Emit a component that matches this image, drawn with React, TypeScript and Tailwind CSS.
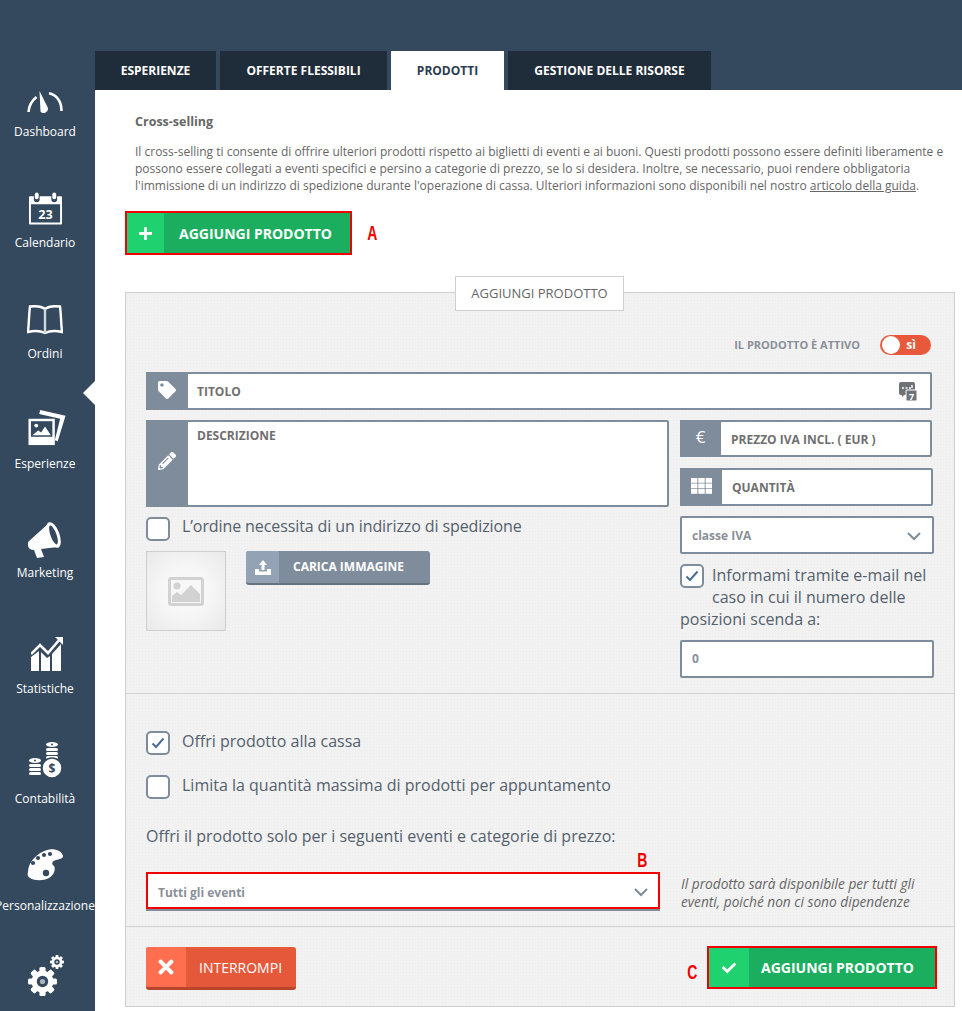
import React from "react";
import { FaTag, FaPencilAlt, FaTimes, FaCheck, FaPlus } from "react-icons/fa";

const font = { fontFamily: '"Open Sans", sans-serif' };
const SIDE = "#34495e";

function Gauge() {
  return (
    <svg width="36" height="22" viewBox="0 0 36 22" fill="none">
      <path d="M1.500 21 C2 14 5 9.500 9.500 6" stroke="white" strokeWidth="2.600" />
      <path d="M22 2.200 C29 3.500 34.500 10 34.500 20" stroke="white" strokeWidth="2.600" />
      <path d="M12.500 0 L20.500 16 A4.200 4.200 0 0 1 13.500 20.500 Z" fill="white" />
    </svg>
  );
}
function Calendar() {
  return (
    <svg width="35" height="34" viewBox="0 0 36 34">
      <path d="M2 4 H6 V7 A3 3 0 0 0 12 7 V4 H24 V7 A3 3 0 0 0 30 7 V4 H34 A1 1 0 0 1 35 5 V32 A1 1 0 0 1 34 33 H2 A1 1 0 0 1 1 32 V5 A1 1 0 0 1 2 4 Z M3 12 V31 H33 V12 Z" fill="white" fillRule="evenodd" />
      <rect x="7" y="0" width="4" height="7" rx="2" fill="white" />
      <rect x="25" y="0" width="4" height="7" rx="2" fill="white" />
      <text x="18" y="27" textAnchor="middle" fontSize="13" fontWeight="700" fill="white" fontFamily="Open Sans, sans-serif">23</text>
    </svg>
  );
}
function Book() {
  return (
    <svg width="36" height="30" viewBox="0 0 36 30" fill="none" stroke="white" strokeWidth="2.400">
      <path d="M18 4 C15 1.500 9 0.800 3 1.500 C2 8 2 18 1 27 C7 25.500 14 26 18 28 C22 26 29 25.500 35 27 C34 18 34 8 33 1.500 C27 0.800 21 1.500 18 4 Z" />
      <path d="M18 4 V28" stroke="#cfd6dc" />
    </svg>
  );
}
function Photos() {
  return (
    <svg width="40" height="37" viewBox="0 0 40 38">
      <path d="M13 0 L39 6 L31 32 L28 31 L33.500 9 L12 4 Z" fill="white" />
      <rect x="1" y="9" width="27" height="27" fill="white" />
      <rect x="3.500" y="11.500" width="22" height="16" fill={SIDE} />
      <circle cx="9" cy="16" r="2" fill="white" />
      <path d="M5 26 L11 21 L14 23 L18 17 L24 26 Z" fill="white" />
    </svg>
  );
}
function Megaphone() {
  return (
    <svg width="36" height="36" viewBox="0 0 36 36">
      <path d="M1 20 L22 1 L31 25 L14 27 L17 35 L10 36 L7 28 Q2 28 1 24 Z" fill="white" />
      <ellipse cx="26.500" cy="13" rx="6" ry="13.500" transform="rotate(-20 26.500 13)" fill="white" />
      <ellipse cx="26.500" cy="13" rx="3" ry="10" transform="rotate(-20 26.500 13)" fill={SIDE} />
    </svg>
  );
}
function Chart() {
  return (
    <svg width="33" height="36" viewBox="0 0 33 36">
      <path d="M0 36 V22 L8 16 V36 Z M10 36 V17 L16 23 L19 21 V36 Z M21 36 V19 L30 9 V36 Z" fill="white" />
      <path d="M0 19 L9 10 L17 18 L29 4" stroke="white" strokeWidth="2.600" fill="none" />
      <path d="M24 2 H32 V10 Z" fill="white" />
    </svg>
  );
}
function Coins() {
  return (
    <svg width="33" height="36" viewBox="0 0 33 36">
      <ellipse cx="23" cy="2.500" rx="6" ry="2.500" fill="white" />
      <circle cx="23" cy="2.500" r="1" fill={SIDE} />
      {[6, 10, 14].map((y) => <rect key={y} x="17" y={y} width="12" height="3" rx="1.500" fill="white" />)}
      <ellipse cx="6" cy="18.500" rx="6" ry="2.500" fill="white" />
      <circle cx="6" cy="18.500" r="1" fill={SIDE} />
      {[22, 26, 30].map((y) => <rect key={y} x="0" y={y} width="12" height="3" rx="1.500" fill="white" />)}
      <circle cx="23" cy="26" r="10" fill="white" stroke={SIDE} strokeWidth="1.500" />
      <text x="23" y="30.500" textAnchor="middle" fontSize="12" fontWeight="700" fill={SIDE} fontFamily="Open Sans, sans-serif">$</text>
    </svg>
  );
}
function Palette() {
  return (
    <svg width="37" height="34" viewBox="0 0 37 34">
      <path d="M1 24 C1 14 10 5 20 2 C27 0 35 3 36 8 C36 11 32 11 29 12 C25 13 24 16 27 18 C29 21 27 27 22 30 C16 33 8 33 3 30 C1 29 0 27 1 24 Z" fill="white" />
      {[[6, 15], [11, 10], [17, 7], [23, 6]].map(([x, y]) => <circle key={x} cx={x} cy={y} r="2.100" fill={SIDE} />)}
      <circle cx="19" cy="25" r="3.200" fill={SIDE} />
    </svg>
  );
}
function Gear({ size }: { size: number }) {
  return (
    <svg width={size} height={size} viewBox="0 0 28 28">
      {[0, 45, 90, 135, 180, 225, 270, 315].map((a) => (
        <rect key={a} x="11" y="0" width="6" height="7" rx="1.500" fill="white" transform={`rotate(${a} 14 14)`} />
      ))}
      <circle cx="14" cy="14" r="10.500" fill="white" />
      <circle cx="14" cy="14" r="5.500" fill={SIDE} />
      <circle cx="14" cy="14" r="2.500" fill="#aab4be" />
    </svg>
  );
}
function Nav({ h, label, icon, iconClass }: { h: string; label: string; icon: React.ReactNode; iconClass: string }) {
  return (
    <div className={`flex flex-col items-center ${h}`}>
      <div className={`flex justify-center items-start ${iconClass}`}>{icon}</div>
      <span className="text-[12px] leading-[17px] text-white whitespace-nowrap">{label}</span>
    </div>
  );
}
function IconBox({ w, children, cls = "" }: { w: string; children: React.ReactNode; cls?: string }) {
  return <div className={`${w} shrink-0 bg-[#7f8c9b] flex justify-center text-white ${cls}`}>{children}</div>;
}
function Check({ checked, cls = "" }: { checked?: boolean; cls?: string }) {
  return (
    <span className={`w-6 h-6 shrink-0 rounded-[5px] border-2 border-[#7f8c9b] bg-white flex items-center justify-center ${cls}`}>
      {checked && (
        <svg width="14" height="12" viewBox="0 0 14 12" fill="none"><path d="M1.500 6.500 L5 10 L12.500 1.500" stroke="#4a6d95" strokeWidth="2" /></svg>
      )}
    </span>
  );
}
function Chevron() {
  return (
    <svg width="14" height="9" viewBox="0 0 14 9" fill="none"><path d="M1 1 L7 7 L13 1" stroke="#7f8c9b" strokeWidth="2" /></svg>
  );
}
function Anno({ children, cls }: { children: React.ReactNode; cls: string }) {
  return <span className={`absolute text-[#f00000] text-[20px] leading-none font-bold scale-x-[0.7] ${cls}`} style={{ fontFamily: '"Liberation Sans", sans-serif' }}>{children}</span>;
}

export default function App() {
  return (
    <div className="w-[962px] h-[1011px] overflow-hidden flex bg-[#34495e]" style={font}>
      <aside className="w-[95px] shrink-0 pt-[90px] pr-[5px] flex flex-col">
        <Nav h="h-[101px] shrink-0" label="Dashboard" iconClass="h-[33px] pt-[1px]" icon={<Gauge />} />
        <Nav h="h-[111px] shrink-0" label="Calendario" iconClass="h-[43px] pt-[1px]" icon={<Calendar />} />
        <Nav h="h-[108px] shrink-0" label="Ordini" iconClass="h-[43px] pt-[3px]" icon={<Book />} />
        <Nav h="h-[112px] shrink-0" label="Esperienze" iconClass="h-[45px] ml-[3px]" icon={<Photos />} />
        <Nav h="h-[113px] shrink-0" label="Marketing" iconClass="h-[42px]" icon={<Megaphone />} />
        <Nav h="h-[107px] shrink-0" label="Statistiche" iconClass="h-[45px] ml-[4px]" icon={<Chart />} />
        <Nav h="h-[106px] shrink-0" label="Contabilità" iconClass="h-[48px]" icon={<Coins />} />
        <Nav h="h-[110px] shrink-0" label="Personalizzazione" iconClass="h-[49px]" icon={<Palette />} />
        <div className="relative flex flex-col items-center shrink-0 h-[70px]">
          <div className="h-[49px] pt-[9px] -ml-[6px]"><Gear size={29} /></div>
          <div className="absolute top-[-3px] left-[50px]"><Gear size={14} /></div>
          <span className="text-[12px] leading-[17px] text-white whitespace-nowrap">Impostazioni</span>
        </div>
      </aside>
      <main className="flex-1 flex flex-col pt-[51px] relative">
        <span className="absolute left-[-12px] top-[381px] w-0 h-0 border-y-[12px] border-y-transparent border-r-[12px] border-r-white" />
        <nav className="flex gap-1 h-[39px] text-[12px] font-bold text-white">
          <div className="w-[121px] bg-[#1f2c3a] flex items-center justify-center">ESPERIENZE</div>
          <div className="w-[167px] bg-[#1f2c3a] flex items-center justify-center">OFFERTE FLESSIBILI</div>
          <div className="w-[113px] bg-white text-[#2c3e50] flex items-center justify-center">PRODOTTI</div>
          <div className="w-[203px] bg-[#1f2c3a] flex items-center justify-center">GESTIONE DELLE RISORSE</div>
        </nav>
        <section className="flex-1 bg-white pl-[30px] pr-[7px] relative">
          <h2 className="text-[12.5px] leading-[17px] font-bold text-[#666] ml-[10px] mt-[23px]">Cross-selling</h2>
          <p className="ml-[10px] mt-[13px] text-[12px] leading-[17px] text-[#666] w-[815px]">
            Il cross-selling ti consente di offrire ulteriori prodotti rispetto ai biglietti di eventi e ai buoni. Questi prodotti possono essere definiti liberamente e possono essere collegati a eventi specifici e persino a categorie di prezzo, se lo si desidera. Inoltre, se necessario, puoi rendere obbligatoria l'immissione di un indirizzo di spedizione durante l'operazione di cassa. Ulteriori informazioni sono disponibili nel nostro <span className="underline">articolo della guida</span>.
          </p>
          <button className="mt-[17px] w-[227px] h-[44px] border-2 border-[#f00000] bg-[#1bae5f] flex items-stretch text-white font-bold text-[14px]">
            <span className="w-[37px] bg-[#1fd16f] flex items-center justify-center"><FaPlus size={15} /></span>
            <span className="flex-1 flex items-center pl-[15px]">AGGIUNGI PRODOTTO</span>
          </button>
          <Anno cls="left-[270px] top-[133px]">A</Anno>

          <div className="relative mt-[37px] h-[715px] border border-[#cfcfcf] bg-[#f2f2f2] bg-[radial-gradient(#ebebeb_0.6px,transparent_0.6px)] bg-[length:3px_3px] flex flex-col text-[#54606c]">
            <div className="absolute left-[329px] top-[-17px] w-[169px] h-[35px] bg-white border border-[#d0d0d0] flex items-center justify-center text-[13px] text-[#666]">AGGIUNGI PRODOTTO</div>

            <div className="px-[20px] h-[400px] shrink-0 pt-[42px]">
              <div className="flex items-center justify-end h-[20px] pr-[3px] gap-[20px]">
                <span className="text-[11px] font-bold text-[#8a8f98]">IL PRODOTTO È ATTIVO</span>
                <span className="w-[51px] h-[20px] rounded-full bg-[#e8583a] flex items-center pl-[2px] pr-[15px] justify-between">
                  <span className="w-[18px] h-[18px] rounded-full bg-white" />
                  <span className="text-white text-[12px] font-bold">sì</span>
                </span>
              </div>
              <div className="mt-[17px] h-[38px] w-[786px] rounded-[2px] border-2 border-[#7f8c9b] bg-white flex items-stretch">
                <IconBox w="w-[42px]" cls="-ml-[2px] -my-[2px] items-center pb-[2px]"><FaTag size={18} /></IconBox>
                <span className="flex-1 flex items-center pl-[9px] pt-[2px] text-[12px] font-bold text-[#706f6f]">TITOLO</span>
                <svg width="18" height="19" viewBox="0 0 18 19" className="self-center mr-[13px]">
                  <path d="M2 0 H14 A2 2 0 0 1 16 2 V11 A2 2 0 0 1 14 13 H5 L3 15 V13 H2 A2 2 0 0 1 0 11 V2 A2 2 0 0 1 2 0 Z" fill="#6f7378" />
                  <path d="M3 6 H5 M6.500 6 H8.500 M10 6 H12 M13 6 V3" stroke="white" strokeWidth="1.400" fill="none" />
                  <rect x="7" y="8" width="11" height="11" rx="1" fill="#6f7378" stroke="white" />
                  <text x="12.500" y="17.500" textAnchor="middle" fontSize="9" fontWeight="700" fill="white" fontFamily="Open Sans, sans-serif">7</text>
                </svg>
              </div>
              <div className="mt-[10px] flex items-start gap-[11px]">
                <div className="w-[523px] shrink-0">
                  <div className="h-[87px] rounded-[2px] border-2 border-[#7f8c9b] bg-white flex items-stretch">
                    <IconBox w="w-[42px]" cls="-ml-[2px] -my-[2px] items-center pb-[6px]"><FaPencilAlt size={18} /></IconBox>
                    <span className="pl-[9px] pt-[5px] text-[12px] font-bold text-[#706f6f]">DESCRIZIONE</span>
                  </div>
                  <label className="mt-[10px] flex items-center gap-[12px] text-[16px] leading-[24px]"><Check /><span className="-translate-y-[3px] tracking-[-0.1px]">L’ordine necessita di un indirizzo di spedizione</span></label>
                  <div className="mt-[10px] flex items-start gap-[20px]">
                    <div className="w-[80px] h-[80px] border border-[#cfcfcf] bg-[radial-gradient(circle,#f7f7f7_40%,#e9e9e9_100%)] flex items-center justify-center">
                      <svg width="36" height="29" viewBox="0 0 36 29">
                        <rect x="1.500" y="1.500" width="33" height="26" rx="2" fill="none" stroke="#d2d2d2" strokeWidth="3" />
                        <circle cx="9" cy="9" r="3.500" fill="#d2d2d2" />
                        <path d="M4 25 V19 L9 15 L13 18 L23 8 L32 17 V25 Z" fill="#d2d2d2" />
                      </svg>
                    </div>
                    <button className="w-[184px] h-[34px] rounded-[3px] bg-[#7f8c9b] border-b-2 border-b-[#67737f] flex items-stretch text-white font-bold text-[12px]">
                      <span className="w-[33px] bg-[#93a3b5] rounded-l-[3px] flex items-center justify-center">
                        <svg width="16" height="15" viewBox="0 0 16 15"><path d="M8 0 L12 5 H9.500 V10 H6.500 V5 H4 Z M0 9 H4 V11.500 H12 V9 H16 V15 H0 Z" fill="white" /></svg>
                      </span>
                      <span className="flex-1 flex items-center pl-[14px]">CARICA IMMAGINE</span>
                    </button>
                  </div>
                </div>
                <div className="flex-1 min-w-0">
                  <div className="h-[37px] w-[252px] rounded-[2px] border-2 border-[#7f8c9b] bg-white flex items-stretch">
                    <IconBox w="w-[41px]" cls="-ml-[2px] -my-[2px] items-center pb-[3px] text-[17px]">€</IconBox>
                    <span className="flex-1 flex items-center pl-[10px] pt-[2px] text-[12px] font-bold text-[#706f6f]">PREZZO IVA INCL. ( EUR )</span>
                  </div>
                  <div className="mt-[11px] h-[38px] w-[253px] rounded-[2px] border-2 border-[#7f8c9b] bg-white flex items-stretch">
                    <IconBox w="w-[42px]" cls="-ml-[2px] -my-[2px] items-center pb-[3px]">
                      <svg width="21" height="16" viewBox="0 0 21 16" fill="white">
                        {[0, 5.500, 11].map((y) => [0, 7.300, 14.600].map((x) => <rect key={`${x}-${y}`} x={x} y={y} width="6.400" height="4.800" />))}
                      </svg>
                    </IconBox>
                    <span className="flex-1 flex items-center pl-[10px] pt-[2px] text-[12px] font-bold text-[#706f6f]">QUANTITÀ</span>
                  </div>
                  <div className="mt-[10px] h-[38px] w-[254px] border-2 border-[#7f8c9b] rounded-[2px] bg-white flex items-center justify-between pl-[10px] pr-[11px] pt-[2px] text-[12px] font-bold text-[#8a8f98]">
                    <span>classe IVA</span><Chevron />
                  </div>
                  <div className="mt-[10px] text-[16px] leading-[22px] w-[254px]">
                    <Check checked cls="float-left mr-[8px] mb-[2px]" />
                    <span>Informami tramite e-mail nel caso in cui il numero delle posizioni scenda a:</span>
                  </div>
                  <div className="mt-[10px] h-[38px] w-[254px] border-2 border-[#7f8c9b] rounded-[2px] bg-white flex items-center pl-[10px] text-[12px] font-bold text-[#8a8f98]">0</div>
                </div>
              </div>
            </div>

            <div className="border-t border-[#d2d2d2] h-[233px] shrink-0 px-[20px] pt-[37px] flex flex-col">
              <label className="flex items-center gap-[12px] text-[16px] leading-[24px]"><Check checked /><span className="-translate-y-[2px]">Offri prodotto alla cassa</span></label>
              <label className="mt-[20px] flex items-center gap-[12px] text-[16px] leading-[24px]"><Check /><span className="-translate-y-[2px]">Limita la quantità massima di prodotti per appuntamento</span></label>
              <p className="mt-[25px] text-[16px] leading-[24px]">Offri il prodotto solo per i seguenti eventi e categorie di prezzo:</p>
              <div className="mt-[24px] flex items-start">
                <div className="relative w-[514px] h-[37px] border-2 border-[#f00000] bg-white flex items-center justify-between pl-[10px] pr-[10px] pt-[4px] text-[12px] font-bold text-[#8a8f98] shadow-[0_2px_0_#7f8c9b]">
                  <span>Tutti gli eventi</span><Chevron />
                </div>
                <p className="ml-[21px] mt-[3px] text-[13.7px] leading-[18px] italic text-[#666] w-[250px]">Il prodotto sarà disponibile per tutti gli eventi, poiché non ci sono dipendenze</p>
              </div>
            </div>

            <div className="border-t border-[#d2d2d2] flex-1 px-[20px] pr-[17px] pt-[19px] flex items-start justify-between">
              <button className="mt-[1px] w-[150px] h-[43px] rounded-[3px] bg-[#e5593a] border-b-[3px] border-b-[#b8452c] flex items-stretch text-white text-[14px]">
                <span className="w-[40px] bg-[#ff6e4e] rounded-l-[3px] flex items-center justify-center"><FaTimes size={22} /></span>
                <span className="flex-1 flex items-center pl-[13px]">INTERROMPI</span>
              </button>
              <button className="w-[230px] h-[43px] border-2 border-[#f00000] bg-[#1bae5f] flex items-stretch text-white font-bold text-[14px]">
                <span className="w-[40px] bg-[#1fd16f] flex items-center justify-center"><FaCheck size={14} /></span>
                <span className="flex-1 flex items-center pl-[12px]">AGGIUNGI PRODOTTO</span>
              </button>
            </div>
            <Anno cls="left-[509px] top-[557px]">B</Anno>
            <Anno cls="left-[559px] top-[669px]">C</Anno>
          </div>
        </section>
      </main>
    </div>
  );
}
